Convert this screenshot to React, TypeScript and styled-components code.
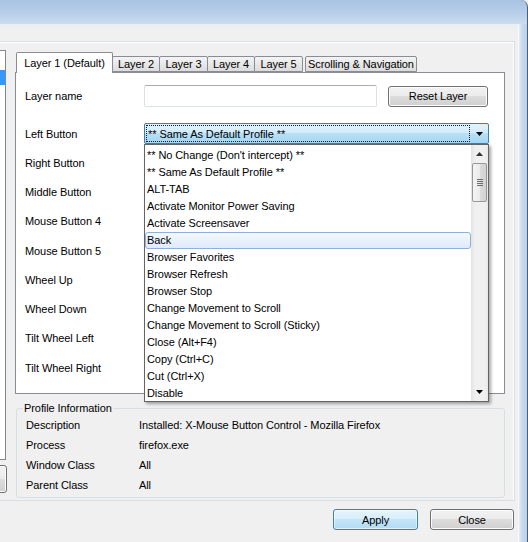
import { FC } from "react";
import styled, { createGlobalStyle } from "styled-components";

const GlobalStyle = createGlobalStyle`
  html, body {
    margin: 0;
    padding: 0;
    background: #f0f0f0;
  }
  body {
    font-family: "Liberation Sans", Arial, sans-serif;
    font-size: 11px;
    letter-spacing: -0.08px;
    color: #000;
  }
`;

const Window = styled.div`
  width: 528px;
  height: 542px;
  overflow: hidden;
  display: flex;
  flex-direction: column;
  background: #f0f0f0;
`;

const TitleBar = styled.div`
  flex: none;
  height: 24px;
  background: linear-gradient(#a8c3e3, #b9cfe9 55%, #cadcef);
  border-right: 1px solid #4b6078;
  border-top-right-radius: 7px;
`;

const Body = styled.div`
  flex: 1;
  display: flex;
`;

const Client = styled.div`
  width: 518px;
  display: flex;
  flex-direction: column;
  background: #f0f0f0;
`;

const WindowEdge = styled.div`
  flex: 1;
  background: linear-gradient(to right, #e4edf7, #c8daee 40%, #bcd1ea);
  border-left: 1px solid #f7f9fc;
  border-right: 1px solid #4b6078;
`;

const TopStrip = styled.div`
  height: 17px;
  background: linear-gradient(#e9eef4, #f0f0f0 40%);
`;

const Frame = styled.div`
  width: 515px;
  box-sizing: border-box;
  display: flex;
  align-items: flex-start;
  padding: 0 9px 2px 0;
  border-top: 1px solid #d5dfe5;
  border-right: 1px solid #d5dfe5;
  border-bottom: 1px solid #d5dfe5;
  box-shadow: inset 0 1px 0 #fff, inset -1px 0 0 #fff;
`;

const SideColumn = styled.div`
  width: 66px;
  margin: 8px 0 0 -60px;
  display: flex;
  flex-direction: column;
  gap: 5px;
`;

const SideList = styled.div`
  height: 410px;
  width: 66px;
  box-sizing: border-box;
  background: #fff;
  border: 1px solid #828790;
  padding-top: 19px;
`;

const SideSelection = styled.div`
  height: 15px;
  background: #3399ff;
`;

const MainColumn = styled.div`
  width: 490px;
  margin-left: 9px;
  padding-top: 10px;
  display: flex;
  flex-direction: column;
`;

const TabStrip = styled.div`
  height: 20px;
  display: flex;
  align-items: flex-end;
  padding-left: 1px;
  position: relative;
  z-index: 1;
`;

const Tab = styled.div<{ $active?: boolean; $w: number; $gap?: number }>`
  width: ${({ $w }) => $w}px;
  height: ${({ $active }) => ($active ? 21 : 16)}px;
  box-sizing: border-box;
  margin-left: ${({ $gap }) => $gap ?? -1}px;
  margin-bottom: ${({ $active }) => ($active ? -1 : 0)}px;
  border: 1px solid #898c95;
  border-bottom: ${({ $active }) => ($active ? "none" : "1px solid #898c95")};
  border-radius: 2px 2px 0 0;
  background: ${({ $active }) =>
    $active ? "#fff" : "linear-gradient(#f4f4f4, #e8e8e8 50%, #dcdcdc)"};
  display: flex;
  align-items: center;
  justify-content: center;
  padding-bottom: ${({ $active }) => ($active ? 1 : 0)}px;
  white-space: nowrap;
  &:first-child {
    margin-left: 0;
  }
`;

const TabPanel = styled.div`
  height: 322px;
  box-sizing: border-box;
  background: #fff;
  border: 1px solid #898c95;
  padding: 12px 15px 0 9px;
  display: flex;
  flex-direction: column;
`;

const FieldRow = styled.div<{ $h: number }>`
  height: ${({ $h }) => $h}px;
  display: grid;
  grid-template-columns: 119px 1fr;
  align-items: center;
`;

const FieldLabel = styled.span`
  white-space: nowrap;
`;

const NameControls = styled.div`
  display: flex;
  align-items: center;
  gap: 11px;
`;

const TextBox = styled.div`
  width: 233px;
  height: 22px;
  box-sizing: border-box;
  background: #fff;
  border: 1px solid #dbdfe6;
  border-top-color: #abadb3;
  border-radius: 2px;
`;

const PushButton = styled.button<{ $w: number; $focus?: boolean }>`
  width: ${({ $w }) => $w}px;
  height: 21px;
  box-sizing: border-box;
  padding: 0;
  font: inherit;
  letter-spacing: inherit;
  color: #000;
  border-radius: 3px;
  border: 1px solid ${({ $focus }) => ($focus ? "#3c7fb1" : "#707070")};
  background: ${({ $focus }) =>
    $focus
      ? "linear-gradient(#e6f4fc, #d6eefb 49%, #c2e5f8 50%, #b3dbf2)"
      : "linear-gradient(#f2f2f2, #ebebeb 49%, #dddddd 50%, #cfcfcf)"};
  box-shadow: inset 0 0 0 1px
    ${({ $focus }) => ($focus ? "rgba(255,255,255,0.55)" : "#fcfcfc")};
`;

const ComboStack = styled.div`
  margin-top: 16px;
  display: flex;
  flex-direction: column;
  gap: 8.25px;
`;

const ComboAnchor = styled.div`
  position: relative;
  width: 345px;
  height: 21px;
`;

const ComboBox = styled.div<{ $open?: boolean }>`
  width: 100%;
  height: 100%;
  box-sizing: border-box;
  display: flex;
  border-radius: 2px;
  border: 1px solid ${({ $open }) => ($open ? "#3c7fb1" : "#707070")};
  background: ${({ $open }) =>
    $open
      ? "linear-gradient(#e3f3fc, #d0ebf9 49%, #b8e0f6 50%, #a6d6f1)"
      : "linear-gradient(#f2f2f2, #ebebeb 49%, #dddddd 50%, #cfcfcf)"};
`;

const ComboText = styled.div<{ $focus?: boolean }>`
  flex: 1;
  margin: 1px 0 1px 1px;
  padding-left: 1px;
  display: flex;
  align-items: center;
  border: 1px dotted ${({ $focus }) => ($focus ? "#1a1a1a" : "transparent")};
  white-space: nowrap;
`;

const ComboArrow = styled.div`
  width: 18px;
  display: flex;
  align-items: center;
  justify-content: center;
`;

const DropList = styled.div`
  position: absolute;
  top: 100%;
  left: 0;
  width: 345px;
  height: 258px;
  box-sizing: border-box;
  z-index: 5;
  display: flex;
  background: #fff;
  border: 1px solid #646464;
  box-shadow: 2px 2px 3px rgba(0, 0, 0, 0.35);
`;

const DropItems = styled.div`
  flex: 1;
  padding-top: 2px;
`;

const DropItem = styled.div<{ $hot?: boolean }>`
  height: 17px;
  box-sizing: border-box;
  padding-left: ${({ $hot }) => ($hot ? 1 : 2)}px;
  line-height: ${({ $hot }) => ($hot ? 15 : 17)}px;
  white-space: nowrap;
  border: ${({ $hot }) => ($hot ? "1px solid #8fb0da" : "none")};
  border-radius: 3px;
  background: ${({ $hot }) =>
    $hot ? "linear-gradient(#f2f8fe, #dfebfa)" : "transparent"};
`;

const ScrollBar = styled.div`
  width: 17px;
  display: flex;
  flex-direction: column;
  background: linear-gradient(to right, #e3e3e3, #f0f0f0 25%, #f0f0f0 80%, #e8e8e8);
`;

const ScrollArrow = styled.div`
  height: 18px;
  display: flex;
  align-items: center;
  justify-content: center;
`;

const ScrollThumb = styled.div`
  height: 39px;
  margin: 0 1px;
  box-sizing: border-box;
  border: 1px solid #979797;
  border-radius: 2px;
  background: linear-gradient(to right, #f4f4f4, #ebebeb 50%, #dcdcdc 51%, #d2d2d2);
  display: flex;
  align-items: center;
  justify-content: center;
`;

const ScrollTrack = styled.div`
  flex: 1;
`;

const GroupBox = styled.fieldset`
  margin: 7px 0 0 1px;
  padding: 0 0 2px 0;
  width: 489px;
  box-sizing: border-box;
  border: 1px solid #d5dfe5;
  border-radius: 3px;
`;

const GroupTitle = styled.legend`
  margin-left: 6px;
  padding: 0 1px;
  line-height: 14px;
`;

const InfoRow = styled.div`
  height: 20px;
  display: grid;
  grid-template-columns: 113px 1fr;
  align-items: center;
  padding-left: 9px;
  white-space: nowrap;
`;

const ButtonBar = styled.div`
  margin-top: 8px;
  display: flex;
  justify-content: flex-end;
  gap: 12px;
  padding-right: 4px;
`;

const SideButton = styled(PushButton)`
  height: 28px;
`;

const ArrowDown: FC = () => (
  <svg width="7" height="4" viewBox="0 0 7 4">
    <path d="M0 0H7L3.5 4Z" fill="#000" />
  </svg>
);

const ArrowUp: FC = () => (
  <svg width="7" height="4" viewBox="0 0 7 4">
    <path d="M0 4H7L3.5 0Z" fill="#333" />
  </svg>
);

const Grip: FC = () => (
  <svg width="6" height="7" viewBox="0 0 6 7">
    <path d="M0 0.5H6M0 2.5H6M0 4.5H6M0 6.5H6" stroke="#6c6c6c" strokeWidth="1" />
  </svg>
);

const actions = [
  "** No Change (Don't intercept) **",
  "** Same As Default Profile **",
  "ALT-TAB",
  "Activate Monitor Power Saving",
  "Activate Screensaver",
  "Back",
  "Browser Favorites",
  "Browser Refresh",
  "Browser Stop",
  "Change Movement to Scroll",
  "Change Movement to Scroll (Sticky)",
  "Close (Alt+F4)",
  "Copy (Ctrl+C)",
  "Cut (Ctrl+X)",
  "Disable",
];

const buttons = [
  "Left Button",
  "Right Button",
  "Middle Button",
  "Mouse Button 4",
  "Mouse Button 5",
  "Wheel Up",
  "Wheel Down",
  "Tilt Wheel Left",
  "Tilt Wheel Right",
];

const tabs = [
  { label: "Layer 1 (Default)", w: 97 },
  { label: "Layer 2", w: 48 },
  { label: "Layer 3", w: 49 },
  { label: "Layer 4", w: 48 },
  { label: "Layer 5", w: 49 },
  { label: "Scrolling & Navigation", w: 112, gap: 2 },
];

const info = [
  ["Description", "Installed: X-Mouse Button Control - Mozilla Firefox"],
  ["Process", "firefox.exe"],
  ["Window Class", "All"],
  ["Parent Class", "All"],
];

const App: FC = () => {
  return (
    <Window>
      <GlobalStyle />
      <TitleBar />
      <Body>
        <Client>
          <TopStrip />
          <Frame>
            <SideColumn>
              <SideList>
                <SideSelection />
              </SideList>
              <SideButton $w={67} />
            </SideColumn>
            <MainColumn>
              <TabStrip>
                {tabs.map((t, i) => (
                  <Tab key={t.label} $active={i === 0} $w={t.w} $gap={t.gap}>
                    {t.label}
                  </Tab>
                ))}
              </TabStrip>
              <TabPanel>
                <FieldRow $h={22}>
                  <FieldLabel>Layer name</FieldLabel>
                  <NameControls>
                    <TextBox />
                    <PushButton $w={100}>Reset Layer</PushButton>
                  </NameControls>
                </FieldRow>
                <ComboStack>
                  {buttons.map((b, i) => (
                    <FieldRow key={b} $h={21}>
                      <FieldLabel>{b}</FieldLabel>
                      <ComboAnchor>
                        <ComboBox $open={i === 0}>
                          <ComboText $focus={i === 0}>
                            {i === 0 ? "** Same As Default Profile **" : ""}
                          </ComboText>
                          <ComboArrow>
                            <ArrowDown />
                          </ComboArrow>
                        </ComboBox>
                        {i === 0 && (
                          <DropList>
                            <DropItems>
                              {actions.map((a) => (
                                <DropItem key={a} $hot={a === "Back"}>
                                  {a}
                                </DropItem>
                              ))}
                            </DropItems>
                            <ScrollBar>
                              <ScrollArrow>
                                <ArrowUp />
                              </ScrollArrow>
                              <ScrollThumb>
                                <Grip />
                              </ScrollThumb>
                              <ScrollTrack />
                              <ScrollArrow>
                                <ArrowDown />
                              </ScrollArrow>
                            </ScrollBar>
                          </DropList>
                        )}
                      </ComboAnchor>
                    </FieldRow>
                  ))}
                </ComboStack>
              </TabPanel>
              <GroupBox>
                <GroupTitle>Profile Information</GroupTitle>
                {info.map(([k, v]) => (
                  <InfoRow key={k}>
                    <span>{k}</span>
                    <span>{v}</span>
                  </InfoRow>
                ))}
              </GroupBox>
            </MainColumn>
          </Frame>
          <ButtonBar>
            <PushButton $w={85} $focus>
              Apply
            </PushButton>
            <PushButton $w={84}>Close</PushButton>
          </ButtonBar>
        </Client>
        <WindowEdge />
      </Body>
    </Window>
  );
};

export default App;
